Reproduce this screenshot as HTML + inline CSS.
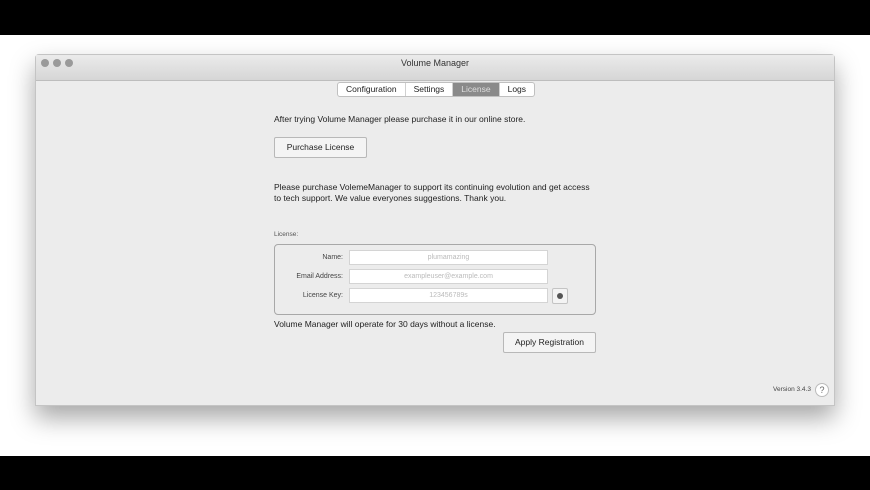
<!DOCTYPE html>
<html><head><style>
*{margin:0;padding:0;box-sizing:border-box}
body{width:870px;height:490px;background:#fff;position:relative;overflow:hidden;font-family:"Liberation Sans",sans-serif;color:#222}
.bar{position:absolute;left:0;width:870px;background:#000}
.win{position:absolute;left:35px;top:54px;width:800px;height:352px;background:#ececec;border:1px solid #c4c4c4;box-shadow:0 12px 25px rgba(0,0,0,.35);border-radius:4px 4px 0 0}
.title{position:absolute;left:0;top:0;width:798px;height:26px;background:linear-gradient(#ebebeb,#d6d6d6);border-bottom:1px solid #bdbdbd;text-align:center;font-size:9px;line-height:16px;color:#333}
.dot{position:absolute;top:4px;width:8px;height:8px;border-radius:50%;background:#9a9a9a}
.a{position:absolute;font-size:8.5px;white-space:nowrap}
.tabs{position:absolute;left:301px;top:27px;height:15px;display:flex;border:1px solid #c0c0c0;border-radius:3px;background:#fff;font-size:8.5px;line-height:13px;overflow:hidden}
.tabs div{padding:0 8px;border-right:1px solid #d0d0d0}
.tabs .sel{background:#8a8a8a;color:#ddd}
.btn{position:absolute;background:#f4f4f4;border:1px solid #b8b8b8;border-radius:2px;font-size:8.5px;text-align:center}
.f{position:absolute;left:313px;width:199px;height:15px;background:#fff;border:1px solid #d4d4d4;font-size:7px;color:#bbb;text-align:center;line-height:13px}
.lbl{position:absolute;width:70px;text-align:right;font-size:7px;color:#444;left:237px}
</style></head><body>
<div class="bar" style="top:0;height:35px"></div>
<div class="bar" style="top:456px;height:34px"></div>
<div class="win">
 <div class="title">Volume Manager
  <div class="dot" style="left:5px"></div><div class="dot" style="left:17px"></div><div class="dot" style="left:29px"></div></div>
 <div class="tabs"><div>Configuration</div><div>Settings</div><div class="sel">License</div><div style="border:none">Logs</div></div>
 <div class="a" style="left:238px;top:59px">After trying Volume Manager please purchase it in our online store.</div>
 <div class="btn" style="left:238px;top:82px;width:93px;height:21px;line-height:19px">Purchase License</div>
 <div class="a" style="left:238px;top:127px;line-height:11px">Please purchase VolemeManager to support its continuing evolution and get access<br>to tech support. We value everyones suggestions. Thank you.</div>
 <div class="a" style="left:238px;top:176px;font-size:6.5px;color:#555">License:</div>
 <div style="position:absolute;left:238px;top:189px;width:322px;height:71px;border:1px solid #a8a8a8;border-radius:4px"></div>
 <div class="lbl" style="top:199px">Name:</div><div class="f" style="top:195px">plumamazing</div>
 <div class="lbl" style="top:218px">Email Address:</div><div class="f" style="top:214px">exampleuser@example.com</div>
 <div class="lbl" style="top:237px">License Key:</div><div class="f" style="top:233px">123456789s</div>
 <div style="position:absolute;left:516px;top:233px;width:16px;height:16px;background:#f4f4f4;border:1px solid #c4c4c4;border-radius:2px"><div style="width:6px;height:6px;border-radius:50%;background:#555;margin:4px auto"></div></div>
 <div class="a" style="left:238px;top:264px">Volume Manager will operate for 30 days without a license.</div>
 <div class="btn" style="left:467px;top:277px;width:93px;height:21px;line-height:19px">Apply Registration</div>
 <div class="a" style="left:737px;top:331px;font-size:6.5px;color:#444">Version 3.4.3</div>
 <div style="position:absolute;left:779px;top:328px;width:14px;height:14px;border-radius:50%;background:#fff;border:1px solid #bbb;font-size:9px;text-align:center;line-height:12px;color:#666">?</div>
</div>
</body></html>
